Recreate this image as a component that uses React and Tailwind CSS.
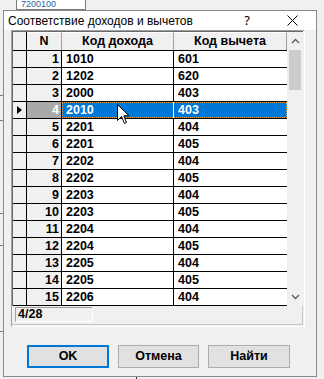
import React from "react";

const rows = [
  [1, "1010", "601"],
  [2, "1202", "620"],
  [3, "2000", "403"],
  [4, "2010", "403"],
  [5, "2201", "404"],
  [6, "2201", "405"],
  [7, "2202", "404"],
  [8, "2202", "405"],
  [9, "2203", "404"],
  [10, "2203", "405"],
  [11, "2204", "404"],
  [12, "2204", "405"],
  [13, "2205", "404"],
  [14, "2205", "405"],
  [15, "2206", "404"],
];

const SELECTED = 4;

const GridRow = ({ n, income, deduction }) => {
  const sel = n === SELECTED;
  return (
    <div className="flex h-[17px] border-b border-black">
      <div className="w-[14px] border-r border-black bg-[#f0f0f0] flex items-center justify-center">
        {sel && (
          <svg width="5" height="8" viewBox="0 0 5 8">
            <path d="M0 0 L5 4 L0 8 Z" fill="#000" />
          </svg>
        )}
      </div>
      <div
        className={
          sel
            ? "w-[35px] border-r border-black bg-[#a9a9a9] text-white text-right pr-[2px] leading-[16px]"
            : "w-[35px] border-r border-black bg-[#f0f0f0] text-right pr-[2px] leading-[16px]"
        }
      >
        {n}
      </div>
      {sel ? (
        <div className="flex flex-1 bg-[#0078d7] text-white outline outline-1 outline-dotted outline-[#f0a040] -outline-offset-1">
          <div className="w-[112px] border-r border-white pl-[4px] leading-[16px]">{income}</div>
          <div className="flex-1 pl-[4px] leading-[16px]">{deduction}</div>
        </div>
      ) : (
        <div className="flex flex-1 bg-white">
          <div className="w-[112px] border-r border-black pl-[4px] leading-[16px]">{income}</div>
          <div className="flex-1 pl-[4px] leading-[16px]">{deduction}</div>
        </div>
      )}
    </div>
  );
};

const Chevron = ({ up }) => (
  <svg width="9" height="6" viewBox="0 0 9 6">
    <path
      d={up ? "M1 5 L4.5 1.5 L8 5" : "M1 1 L4.5 4.5 L8 1"}
      fill="none"
      stroke="#606060"
      strokeWidth="1.4"
    />
  </svg>
);

const App = () => {
  return (
    <div
      className="relative w-[324px] h-[379px] overflow-hidden bg-[#f0f0f0]"
      style={{ fontFamily: '"Liberation Sans", Arial, sans-serif' }}
    >
      {/* background application behind the dialog */}
      <div className="absolute left-[16px] top-[-2px] w-[70px] h-[12px] border border-[#7a7a7a] bg-white text-[9px] leading-[10px] text-[#3060a0] pl-[4px]">
        7200100
      </div>
      <div className="absolute left-0 top-[95px] w-[3px] h-[26px] border-y border-[#7a7a7a]" />
      <div className="absolute left-0 top-[213px] w-[3px] border-t border-[#7a7a7a]" />
      <div className="absolute left-0 top-[245px] w-[3px] border-t border-[#7a7a7a]" />
      <div className="absolute left-0 top-[331px] w-[3px] border-t border-[#7a7a7a]" />
      <div className="absolute left-[136px] top-[372px] h-[10px] border-l border-[#303030]" />

      {/* dialog window */}
      <div className="absolute left-[3px] top-[10px] w-[314px] h-[367px] border border-[#8a8a8a] bg-[#f0f0f0] flex flex-col">
        <div className="h-[19px] bg-white flex items-center">
          <span className="ml-[4px] text-[12px] text-black">Соответствие доходов и вычетов</span>
          <span className="ml-auto mr-[37px] text-[13px] text-black" style={{ fontFamily: '"Noto Sans", sans-serif' }}>
            ?
          </span>
          <svg width="11" height="11" viewBox="0 0 11 11" className="mr-[18px]">
            <path d="M0.5 0.5 L10.5 10.5 M10.5 0.5 L0.5 10.5" stroke="#000" strokeWidth="1" />
          </svg>
        </div>

        {/* grid panel */}
        <div className="ml-[7px] w-[294px] h-[297px] border-t border-l border-[#a0a0a0] border-b border-r border-b-white border-r-white">
          <div className="flex w-[291px] border-t border-l border-[#696969] text-[12.5px] font-bold text-black">
            <div className="w-[274px]">
              {/* header */}
              <div className="flex h-[19px] border-b border-black bg-[#f0f0f0]">
                <div className="w-[14px] border-r border-black" />
                <div className="w-[35px] border-r border-[#a0a0a0] border-t border-t-white text-center leading-[17px]">N</div>
                <div className="w-[112px] border-r border-[#a0a0a0] border-t border-t-white text-center leading-[17px]">Код дохода</div>
                <div className="flex-1 border-r border-[#a0a0a0] border-t border-t-white text-center leading-[17px]">Код вычета</div>
              </div>
              {rows.map(([n, income, deduction]) => (
                <GridRow key={n} n={n} income={income} deduction={deduction} />
              ))}
            </div>
            {/* scrollbar */}
            <div className="w-[16px] bg-[#f0f0f0] flex flex-col items-center">
              <div className="h-[18px] flex items-center justify-center">
                <Chevron up />
              </div>
              <div className="w-[12px] h-[40px] bg-[#cdcdcd]" />
              <div className="flex-1" />
              <div className="h-[18px] flex items-center justify-center">
                <Chevron />
              </div>
            </div>
          </div>
          {/* status bar */}
          <div className="h-[19px] w-[291px] border-r border-b border-[#c8c8c8] flex items-start pt-[1px] pl-[3px]">
            <div className="w-[78px] h-[15px] border-t border-l border-[#a0a0a0] border-b border-r border-b-white border-r-white text-[12.5px] font-bold text-black leading-[13px] pl-[2px]">
              4/28
            </div>
          </div>
        </div>

        {/* buttons */}
        <div className="flex mt-[18px] ml-[23px] gap-[9px] text-[12.5px] font-bold text-black">
          <div className="w-[82px] h-[23px] border-2 border-[#0078d7] bg-[#e1e1e1] flex items-center justify-center">OK</div>
          <div className="w-[81px] h-[23px] border border-[#adadad] bg-[#e1e1e1] flex items-center justify-center">Отмена</div>
          <div className="w-[82px] h-[23px] border border-[#adadad] bg-[#e1e1e1] flex items-center justify-center">Найти</div>
        </div>
      </div>

      {/* mouse cursor */}
      <svg className="absolute left-[117px] top-[104px]" width="13" height="21" viewBox="0 0 13 21">
        <path
          d="M0.5 0.5 L0.5 16.5 L4.5 12.5 L7.5 19.5 L9.5 18.5 L6.8 11.8 L12 11.8 Z"
          fill="#fff"
          stroke="#000"
          strokeWidth="1"
          strokeLinejoin="miter"
        />
      </svg>
    </div>
  );
};

export default App;
